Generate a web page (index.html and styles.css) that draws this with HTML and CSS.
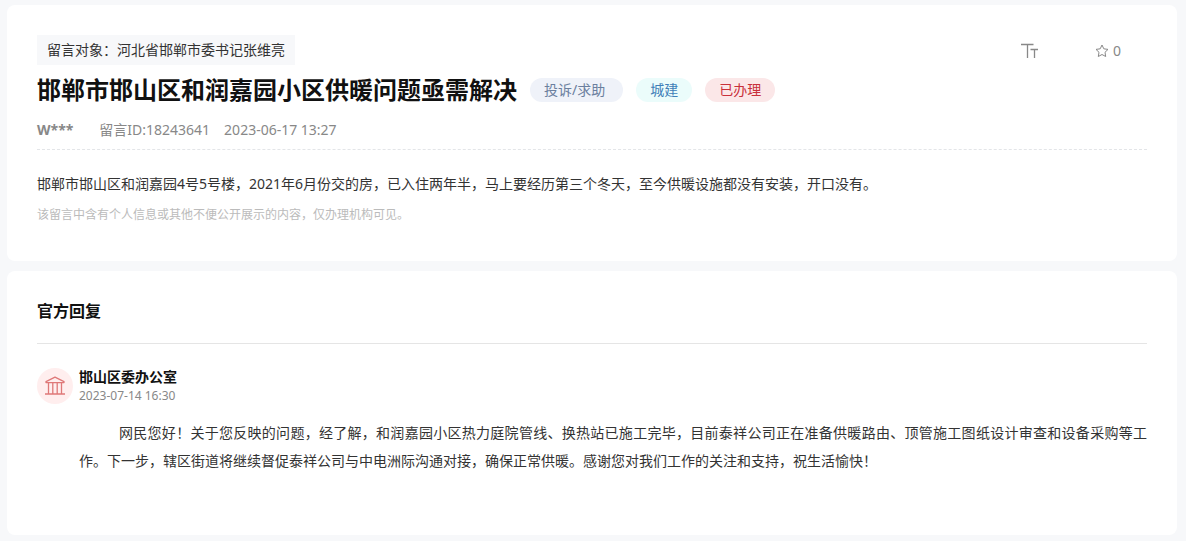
FILE: index.html
```
<!DOCTYPE html>
<html lang="zh-CN">
<head>
    <meta charset="UTF-8">
    <meta name="viewport" content="width=device-width, initial-scale=1.0">
    <title>邯郸市邯山区和润嘉园小区供暖问题亟需解决</title>
    <link rel="stylesheet" href="styles.css">
</head>
<body>
    <main class="page">
        <article class="card message">
            <div class="top-bar">
                <div class="target">留言对象：河北省邯郸市委书记张维亮</div>
                <div class="actions">
                    <button class="action" type="button" aria-label="字号">
                        <svg width="18" height="16" viewBox="0 0 18 16" fill="none" stroke="currentColor" stroke-width="1.3">
                            <path d="M0 1.5h12.5M6.5 1.5V15M9.5 6.5H17M13.5 6.5V15"/>
                        </svg>
                    </button>
                    <button class="action" type="button" aria-label="收藏">
                        <svg width="14" height="14" viewBox="0 0 14 14" fill="none" stroke="currentColor" stroke-linejoin="round">
                            <path d="M7 1l1.8 3.8 4.2.6-3 2.9.7 4.2L7 10.5l-3.7 2 .7-4.2-3-2.9 4.2-.6z"/>
                        </svg>
                        <span>0</span>
                    </button>
                </div>
            </div>

            <div class="title-row">
                <h1>邯郸市邯山区和润嘉园小区供暖问题亟需解决</h1>
                <span class="tag tag-type">投诉/求助</span>
                <span class="tag tag-field">城建</span>
                <span class="tag tag-state">已办理</span>
            </div>

            <div class="meta">
                <strong class="user">W***</strong>
                <span>留言ID:18243641</span>
                <time>2023-06-17 13:27</time>
            </div>

            <p class="content">邯郸市邯山区和润嘉园4号5号楼，2021年6月份交的房，已入住两年半，马上要经历第三个冬天，至今供暖设施都没有安装，开口没有。</p>
            <p class="notice">该留言中含有个人信息或其他不便公开展示的内容，仅办理机构可见。</p>
        </article>

        <section class="card reply">
            <h2>官方回复</h2>
            <div class="reply-head">
                <div class="avatar">
                    <svg width="20" height="20" viewBox="0 0 20 20" fill="none" stroke="currentColor" stroke-width="1.3" stroke-linejoin="round">
                        <path d="M1 5.6L10 1.2l9 4.4v1H1zM3.5 6.6v11M7.8 6.6v11M12.2 6.6v11M16.5 6.6v11M0 18h20"/>
                    </svg>
                </div>
                <div>
                    <h3>邯山区委办公室</h3>
                    <time>2023-07-14 16:30</time>
                </div>
            </div>
            <p class="reply-text">网民您好！关于您反映的问题，经了解，和润嘉园小区热力庭院管线、换热站已施工完毕，目前泰祥公司正在准备供暖路由、顶管施工图纸设计审查和设备采购等工作。下一步，辖区街道将继续督促泰祥公司与中电洲际沟通对接，确保正常供暖。感谢您对我们工作的关注和支持，祝生活愉快！</p>
        </section>
    </main>
</body>
</html>
```
FILE: styles.css
```
* {
    box-sizing: border-box;
}

body {
    margin: 0;
    background-color: #f7f8fa;
    color: #333;
    font-family: "Noto Sans", "Noto Sans CJK SC", sans-serif;
    font-size: 14px;
    line-height: 28px;
}

h1, h2, h3, p {
    margin: 0;
}

.page {
    display: flex;
    flex-direction: column;
    gap: 10px;
    padding: 5px 9px 6px 7px;
}

.card {
    background-color: #fff;
    border-radius: 8px;
}

.message {
    padding: 30px 30px 32px;
}

.top-bar {
    display: flex;
    justify-content: space-between;
    align-items: center;
}

.target {
    padding: 0 10px;
    line-height: 30px;
    background-color: #f7f8fa;
}

.actions {
    display: flex;
    gap: 56px;
    padding: 2px 26px 0 0;
}

.action {
    display: flex;
    align-items: center;
    gap: 4px;
    padding: 0;
    border: none;
    background: none;
    color: #888;
    font: inherit;
    cursor: pointer;
}

.title-row {
    display: flex;
    align-items: center;
    gap: 13px;
    min-height: 50px;
}

h1 {
    color: #111;
    font-size: 24px;
    line-height: 32px;
}

.tag {
    padding: 0 14px;
    border-radius: 12px;
    line-height: 24px;
}

.tag-type {
    padding-right: 18px;
    background-color: #eff2f9;
    color: #6b7f9e;
}

.tag-field {
    background-color: #ebfcfb;
    color: #3f7fb8;
}

.tag-state {
    background-color: #fbe7e8;
    color: #c9303a;
}

.meta {
    display: flex;
    gap: 14px;
    padding-bottom: 4px;
    border-bottom: 1px dashed #e3e5e8;
    color: #888;
    line-height: 30px;
}

.user {
    margin-right: 12px;
}

.content {
    margin-top: 20px;
}

.notice {
    margin-top: 3px;
    color: #bbb;
    font-size: 12px;
}

.reply {
    padding: 24px 30px 60px;
}

h2 {
    padding-bottom: 16px;
    border-bottom: 1px solid #e5e5e5;
    color: #111;
    font-size: 16px;
    line-height: 32px;
}

.reply-head {
    display: flex;
    gap: 6px;
    margin: 24px 0 13px;
}

.avatar {
    display: flex;
    justify-content: center;
    align-items: center;
    width: 36px;
    height: 36px;
    border-radius: 50%;
    background-color: #ffeeee;
    color: #df7878;
}

h3 {
    color: #111;
    font-size: 14px;
    line-height: 18px;
}

.reply-head time {
    display: block;
    color: #888;
    font-size: 12px;
    line-height: 20px;
}

.reply-text {
    margin-left: 42px;
    text-align: justify;
    text-indent: 40px;
}
```
